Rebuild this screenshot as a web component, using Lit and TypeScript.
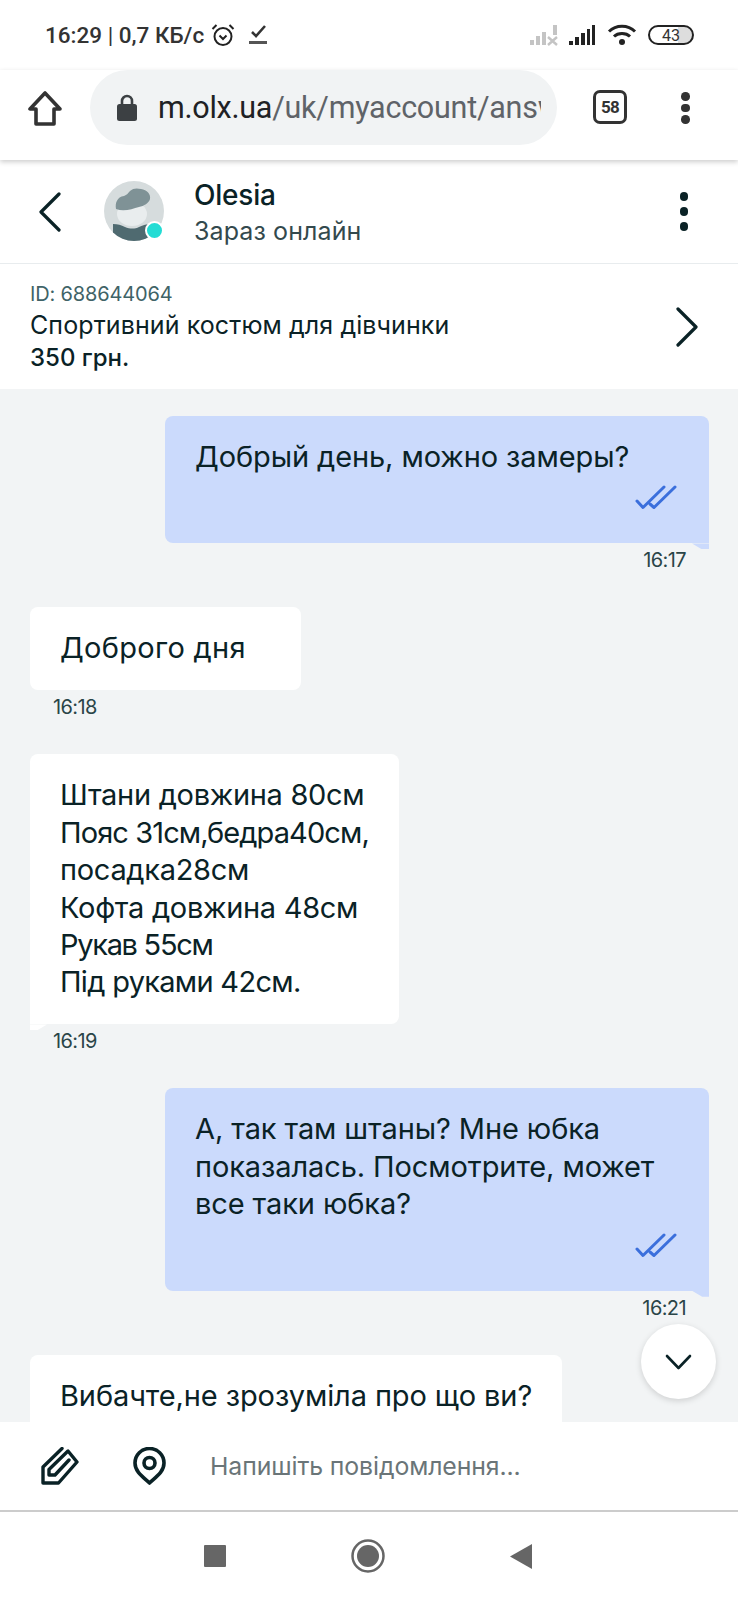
import { LitElement, html, css } from "lit";
import { customElement } from "lit/decorators.js";

const checks = html`<svg class="checks" viewBox="0 0 42 25" width="42" height="25"><path d="M2 16l6 6.500L29 2M15 19l4 3.500L40 2" fill="none" stroke="#3b6fdc" stroke-width="3" stroke-linecap="round" stroke-linejoin="round"/></svg>`;

@customElement("app-root")
export class AppRoot extends LitElement {
  static styles = css`
    :host { display: block; width: 738px; height: 1600px; background: #fff; font-family: Inter, "Noto Sans", sans-serif; color: #0a2226; overflow: hidden; }
    .page { display: flex; flex-direction: column; height: 1600px; position: relative; }
    .status { height: 70px; flex: none; display: flex; align-items: center; box-sizing: border-box; padding-left: 45px; color: #333; font-family: Roboto, sans-serif; font-weight: 500; font-size: 22.500px; }
    .status .thin { font-weight: 400; }
    .alarm { margin-left: 7px; display: block; }
    .done { margin-left: 14px; display: block; }
    .status .sp { flex: 1; }
    .status .right { display: flex; align-items: center; padding-right: 44px; }
    .sig1 { margin-right: 1px; display: block; }
    .sig2 { margin-left: 9px; display: block; }
    .wifi { margin-left: 11px; display: block; }
    .batt { margin-left: 11px; width: 46px; height: 20px; border: 2px solid #222; border-radius: 10px; box-sizing: border-box; display: flex; align-items: center; justify-content: center; font-size: 16px; font-weight: 400; background: linear-gradient(90deg, #fff 66%, #ddd 66%); }
    .toolbar { height: 90px; flex: none; display: flex; align-items: flex-start; position: relative; z-index: 2; box-shadow: 0 2px 5px rgba(0,0,0,.2); background: #fff; }
    .home { margin: 0 0 0 28px; width: 34px; height: 75px; display: flex; align-items: center; }
    .pill { margin-left: 28px; width: 467px; height: 75px; border-radius: 38px; background: #f1f3f4; display: flex; align-items: center; box-sizing: border-box; padding-left: 27px; flex: none; }
    .url { margin-left: 21px; width: 383px; overflow: hidden; white-space: nowrap; font-family: Roboto, sans-serif; font-size: 30.500px; letter-spacing: -.25px; color: #5f6368; }
    .url b { font-weight: 400; color: #202124; }
    .tabs { margin-left: 36px; width: 34px; height: 34px; border: 3.500px solid #333; border-radius: 7px; box-sizing: border-box; display: flex; align-items: center; justify-content: center; font-family: Roboto, sans-serif; font-weight: 700; font-size: 17px; letter-spacing: -.8px; color: #333; margin-top: 20px; }
    .dots { display: flex; flex-direction: column; gap: 3px; }
    .dots i { width: 8.500px; height: 8.500px; border-radius: 50%; background: #333; display: block; }
    .tool-dots { margin: 22px 0 0 54px; }
    .head { height: 104px; flex: none; box-sizing: border-box; border-bottom: 1px solid #e8ecee; display: flex; align-items: center; }
    .back { margin-left: 38px; width: 24px; display: flex; }
    .avatar { margin-left: 42px; position: relative; width: 60px; height: 60px; margin-top: -2px; }
    .online { position: absolute; left: 41px; top: 40px; width: 19px; height: 19px; border-radius: 50%; background: #23dcd4; border: 2px solid #fff; box-sizing: border-box; }
    .who { margin-left: 30px; flex: 1; margin-top: 3px; }
    .name { font-size: 28px; font-weight: 500; line-height: 36px; letter-spacing: -.2px; color: #0a2226; }
    .st { font-size: 25px; line-height: 36px; color: #33494d; letter-spacing: .1px; }
    .head .dots { margin-right: 50px; gap: 6.500px; }
    .head .dots i { background: #0a2226; }
    .item { height: 125px; flex: none; box-sizing: border-box; padding-left: 30px; display: flex; align-items: center; }
    .item .txt { flex: 1; }
    .id { font-size: 20px; line-height: 30px; letter-spacing: -.15px; color: #406367; }
    .t { font-size: 25px; line-height: 32px; letter-spacing: .1px; }
    .p { font-size: 24px; line-height: 33px; font-weight: 500; }
    .item svg { margin-right: 39px; }
    .chat { flex: 1; min-height: 0; overflow: hidden; background: #f2f4f5; box-sizing: border-box; padding: 27px 29px 0 30px; display: flex; flex-direction: column; gap: 34px; }
    .msg { display: flex; flex-direction: column; flex: none; }
    .mine { align-items: flex-end; }
    .theirs { align-items: flex-start; }
    .bubble { position: relative; box-sizing: border-box; border-radius: 8px; padding: 22px 30px 23.600px; font-size: 29px; line-height: 37.400px; letter-spacing: -.1px; color: #0a2226; }
    .text { white-space: pre; }
    .mine .bubble { background: #cbdafc; width: 544px; border-bottom-right-radius: 0; padding-bottom: 33px; }
    .theirs .bubble { background: #fff; }
    .tailed { border-bottom-left-radius: 0 !important; }
    .mine .bubble::after { content: ""; position: absolute; right: 0; top: 100%; width: 17px; height: 6px; background: #cbdafc; clip-path: polygon(0 0, 100% 0, 100% 100%, 60% 100%); }
    .tailed::after { content: ""; position: absolute; left: 0; top: 100%; width: 17px; height: 6px; background: #fff; clip-path: polygon(0 0, 100% 0, 40% 100%, 0 100%); }
    .w271 { width: 271px; letter-spacing: .3px; }
    .w369 { width: 369px; letter-spacing: -.3px; }
    .w532 { width: 532px; }
    .l-pas { letter-spacing: -.9px; }
    .l-ruk { letter-spacing: -1.300px; }
    .l-pid { letter-spacing: -.7px; }
    .tick { display: flex; justify-content: flex-end; margin: 10px 2px 0 0; }
    .checks { display: block; }
    .time { font-size: 20px; line-height: 26px; color: #2a4548; margin-top: 4px; letter-spacing: -.6px; }
    .mine .time { margin-right: 23px; }
    .theirs .time { margin-left: 23px; }
    .fab { position: absolute; left: 641px; top: 1324px; width: 75px; height: 75px; border-radius: 50%; background: #fff; box-shadow: 0 2px 6px rgba(0,0,0,.15); display: flex; align-items: center; justify-content: center; }
    .composer { height: 90px; flex: none; box-sizing: border-box; display: flex; align-items: center; background: #fff; border-bottom: 2px solid #ccc; }
    .clip { margin-left: 41px; display: flex; }
    .pin { margin-left: 54px; display: flex; }
    .ph { margin-left: 44px; font-size: 24.800px; color: #6a7578; letter-spacing: -.1px; }
    .nav { height: 88px; flex: none; display: flex; align-items: center; justify-content: center; gap: 125px; padding-right: 3px; box-sizing: border-box; }
    .nav svg { display: block; }
  `;

  render() {
    return html`<div class="page">
      <div class="status">
        <span>16:29 <span class="thin">|</span> 0,7 КБ/с</span>
        <svg class="alarm" width="24" height="24" viewBox="0 0 24 24" fill="none" stroke="#222" stroke-width="2"><circle cx="12" cy="13.500" r="8.500"/><path d="M8.500 12.500l3.500 3.500 3.500-3.500M1.500 6l4-4M22.500 6l-4-4"/></svg>
        <svg class="done" width="18" height="22" viewBox="0 0 18 22" fill="none"><path d="M3 8l4 4 9-10" stroke="#333" stroke-width="2.600"/><rect x="0" y="17" width="18" height="3" fill="#555"/></svg>
        <span class="sp"></span>
        <div class="right">
          <svg class="sig1" width="28" height="22" viewBox="0 0 28 22" fill="#c4c4c4"><rect x="0" y="16" width="4" height="5"/><rect x="6" y="12" width="4" height="9"/><rect x="12" y="8" width="4" height="13"/><rect x="23" y="1" width="4" height="10"/><path d="M18 13l9 8M27 13l-9 8" stroke="#c4c4c4" stroke-width="2.400"/></svg>
          <svg class="sig2" width="28" height="22" viewBox="0 0 28 22" fill="#222"><rect x="1" y="17" width="4" height="4"/><rect x="7" y="13" width="4" height="8"/><rect x="13" y="9" width="4" height="12"/><rect x="19" y="5" width="3" height="16"/><rect x="24" y="1" width="3" height="20"/></svg>
          <svg class="wifi" width="30" height="22" viewBox="0 0 30 22" fill="none" stroke="#222" stroke-width="3"><path d="M2 7.500c7-7 19-7 26 0M7 12.500c4-4 12-4 16 0"/><circle cx="15" cy="18" r="3" fill="#222" stroke="none"/></svg>
          <div class="batt">43</div>
        </div>
      </div>
      <div class="toolbar">
        <div class="home"><svg width="34" height="36" viewBox="0 0 34 36" fill="none" stroke="#333" stroke-width="3.600" stroke-linejoin="round"><path d="M17 3L2 19h6v15h18V19h6z"/></svg></div>
        <div class="pill">
          <svg width="20" height="27" viewBox="0 0 20 27"><path d="M5 11V7a5 5 0 0 1 10 0v4" fill="none" stroke="#3c4043" stroke-width="2.600"/><rect x="0" y="10" width="20" height="17" rx="2.500" fill="#3c4043"/></svg>
          <div class="url"><b>m.olx.ua</b>/uk/myaccount/answ</div>
        </div>
        <div class="tabs">58</div>
        <div class="dots tool-dots"><i></i><i></i><i></i></div>
      </div>
      <div class="head">
        <div class="back"><svg width="24" height="40" viewBox="0 0 24 40" fill="none" stroke="#0a2226" stroke-width="3.200" stroke-linecap="round" stroke-linejoin="round"><path d="M21 2L3 20l18 18"/></svg></div>
        <div class="avatar">
          <svg width="60" height="60" viewBox="0 0 60 60"><defs><clipPath id="av"><circle cx="30" cy="30" r="30"/></clipPath></defs><g clip-path="url(#av)"><rect width="60" height="60" fill="#d6dcdd"/><path d="M9 60V43c5 0 8 1 12 3 5 2 10 2 14 0 4-2 8-3 12-3v17z" fill="#4f6a70"/><ellipse cx="28" cy="33" rx="15" ry="12" fill="#e9edee"/><path d="M12 28c-1-6 1-12 8-13 3-1 4-3 6-5 3-3 7-3 11-2 6 1 10 5 9 10-1 4-6 7-11 8-7 2-15 5-23 2z" fill="#7f9296"/></g></svg>
          <div class="online"></div>
        </div>
        <div class="who"><div class="name">Olesia</div><div class="st">Зараз онлайн</div></div>
        <div class="dots"><i></i><i></i><i></i></div>
      </div>
      <div class="item">
        <div class="txt"><div class="id">ID: 688644064</div><div class="t">Спортивний костюм для дівчинки</div><div class="p">350 грн.</div></div>
        <svg width="24" height="40" viewBox="0 0 24 40" fill="none" stroke="#0a2226" stroke-width="3.200" stroke-linecap="round" stroke-linejoin="round"><path d="M3 2l18 18L3 38"/></svg>
      </div>
      <div class="chat">
        <div class="msg mine"><div class="bubble"><div class="text">Добрый день, можно замеры?</div><div class="tick">${checks}</div></div><div class="time">16:17</div></div>
        <div class="msg theirs"><div class="bubble w271"><div class="text">Доброго дня</div></div><div class="time">16:18</div></div>
        <div class="msg theirs"><div class="bubble tailed w369"><div class="text">Штани довжина 80см
<span class="l-pas">Пояс 31см,бедра40см,</span>
посадка28см
Кофта довжина 48см
<span class="l-ruk">Рукав 55см</span>
<span class="l-pid">Під руками 42см.</span></div></div><div class="time">16:19</div></div>
        <div class="msg mine"><div class="bubble"><div class="text">А, так там штаны? Мне юбка
показалась. Посмотрите, может
все таки юбка?</div><div class="tick">${checks}</div></div><div class="time">16:21</div></div>
        <div class="msg theirs"><div class="bubble w532"><div class="text">Вибачте,не зрозуміла про що ви?</div></div></div>
      </div>
      <div class="fab"><svg width="27" height="16" viewBox="0 0 27 16" fill="none" stroke="#0a2226" stroke-width="2.600" stroke-linecap="round" stroke-linejoin="round"><path d="M2 2l11.500 12L25 2"/></svg></div>
      <div class="composer">
        <div class="clip"><svg width="38" height="38" viewBox="0 0 38 38" fill="none" stroke="#0a2226" stroke-width="3.400" stroke-linejoin="round" stroke-linecap="round"><path d="M21 1.500L2 20v16h15.500L36 15 27 4 8 22.500V28h6L28 13"/></svg></div>
        <div class="pin"><svg width="33" height="38" viewBox="0 0 33 38" fill="none" stroke="#0a2226" stroke-width="3.600" stroke-linejoin="round"><path d="M16.500 36C10 30 2 25 2 16a14.500 14.500 0 0 1 29 0C31 25 23 30 16.500 36z"/><circle cx="16.500" cy="16" r="5.500"/></svg></div>
        <div class="ph">Напишіть повідомлення...</div>
      </div>
      <div class="nav">
        <svg width="22" height="22" viewBox="0 0 22 22"><rect width="22" height="22" rx="1" fill="#666"/></svg>
        <svg width="34" height="34" viewBox="0 0 34 34"><circle cx="17" cy="17" r="15.500" fill="none" stroke="#666" stroke-width="2.500"/><circle cx="17" cy="17" r="11" fill="#666"/></svg>
        <svg width="22" height="25" viewBox="0 0 22 25"><path d="M22 0v25L0 12.500z" fill="#666"/></svg>
      </div>
    </div>`;
  }
}
